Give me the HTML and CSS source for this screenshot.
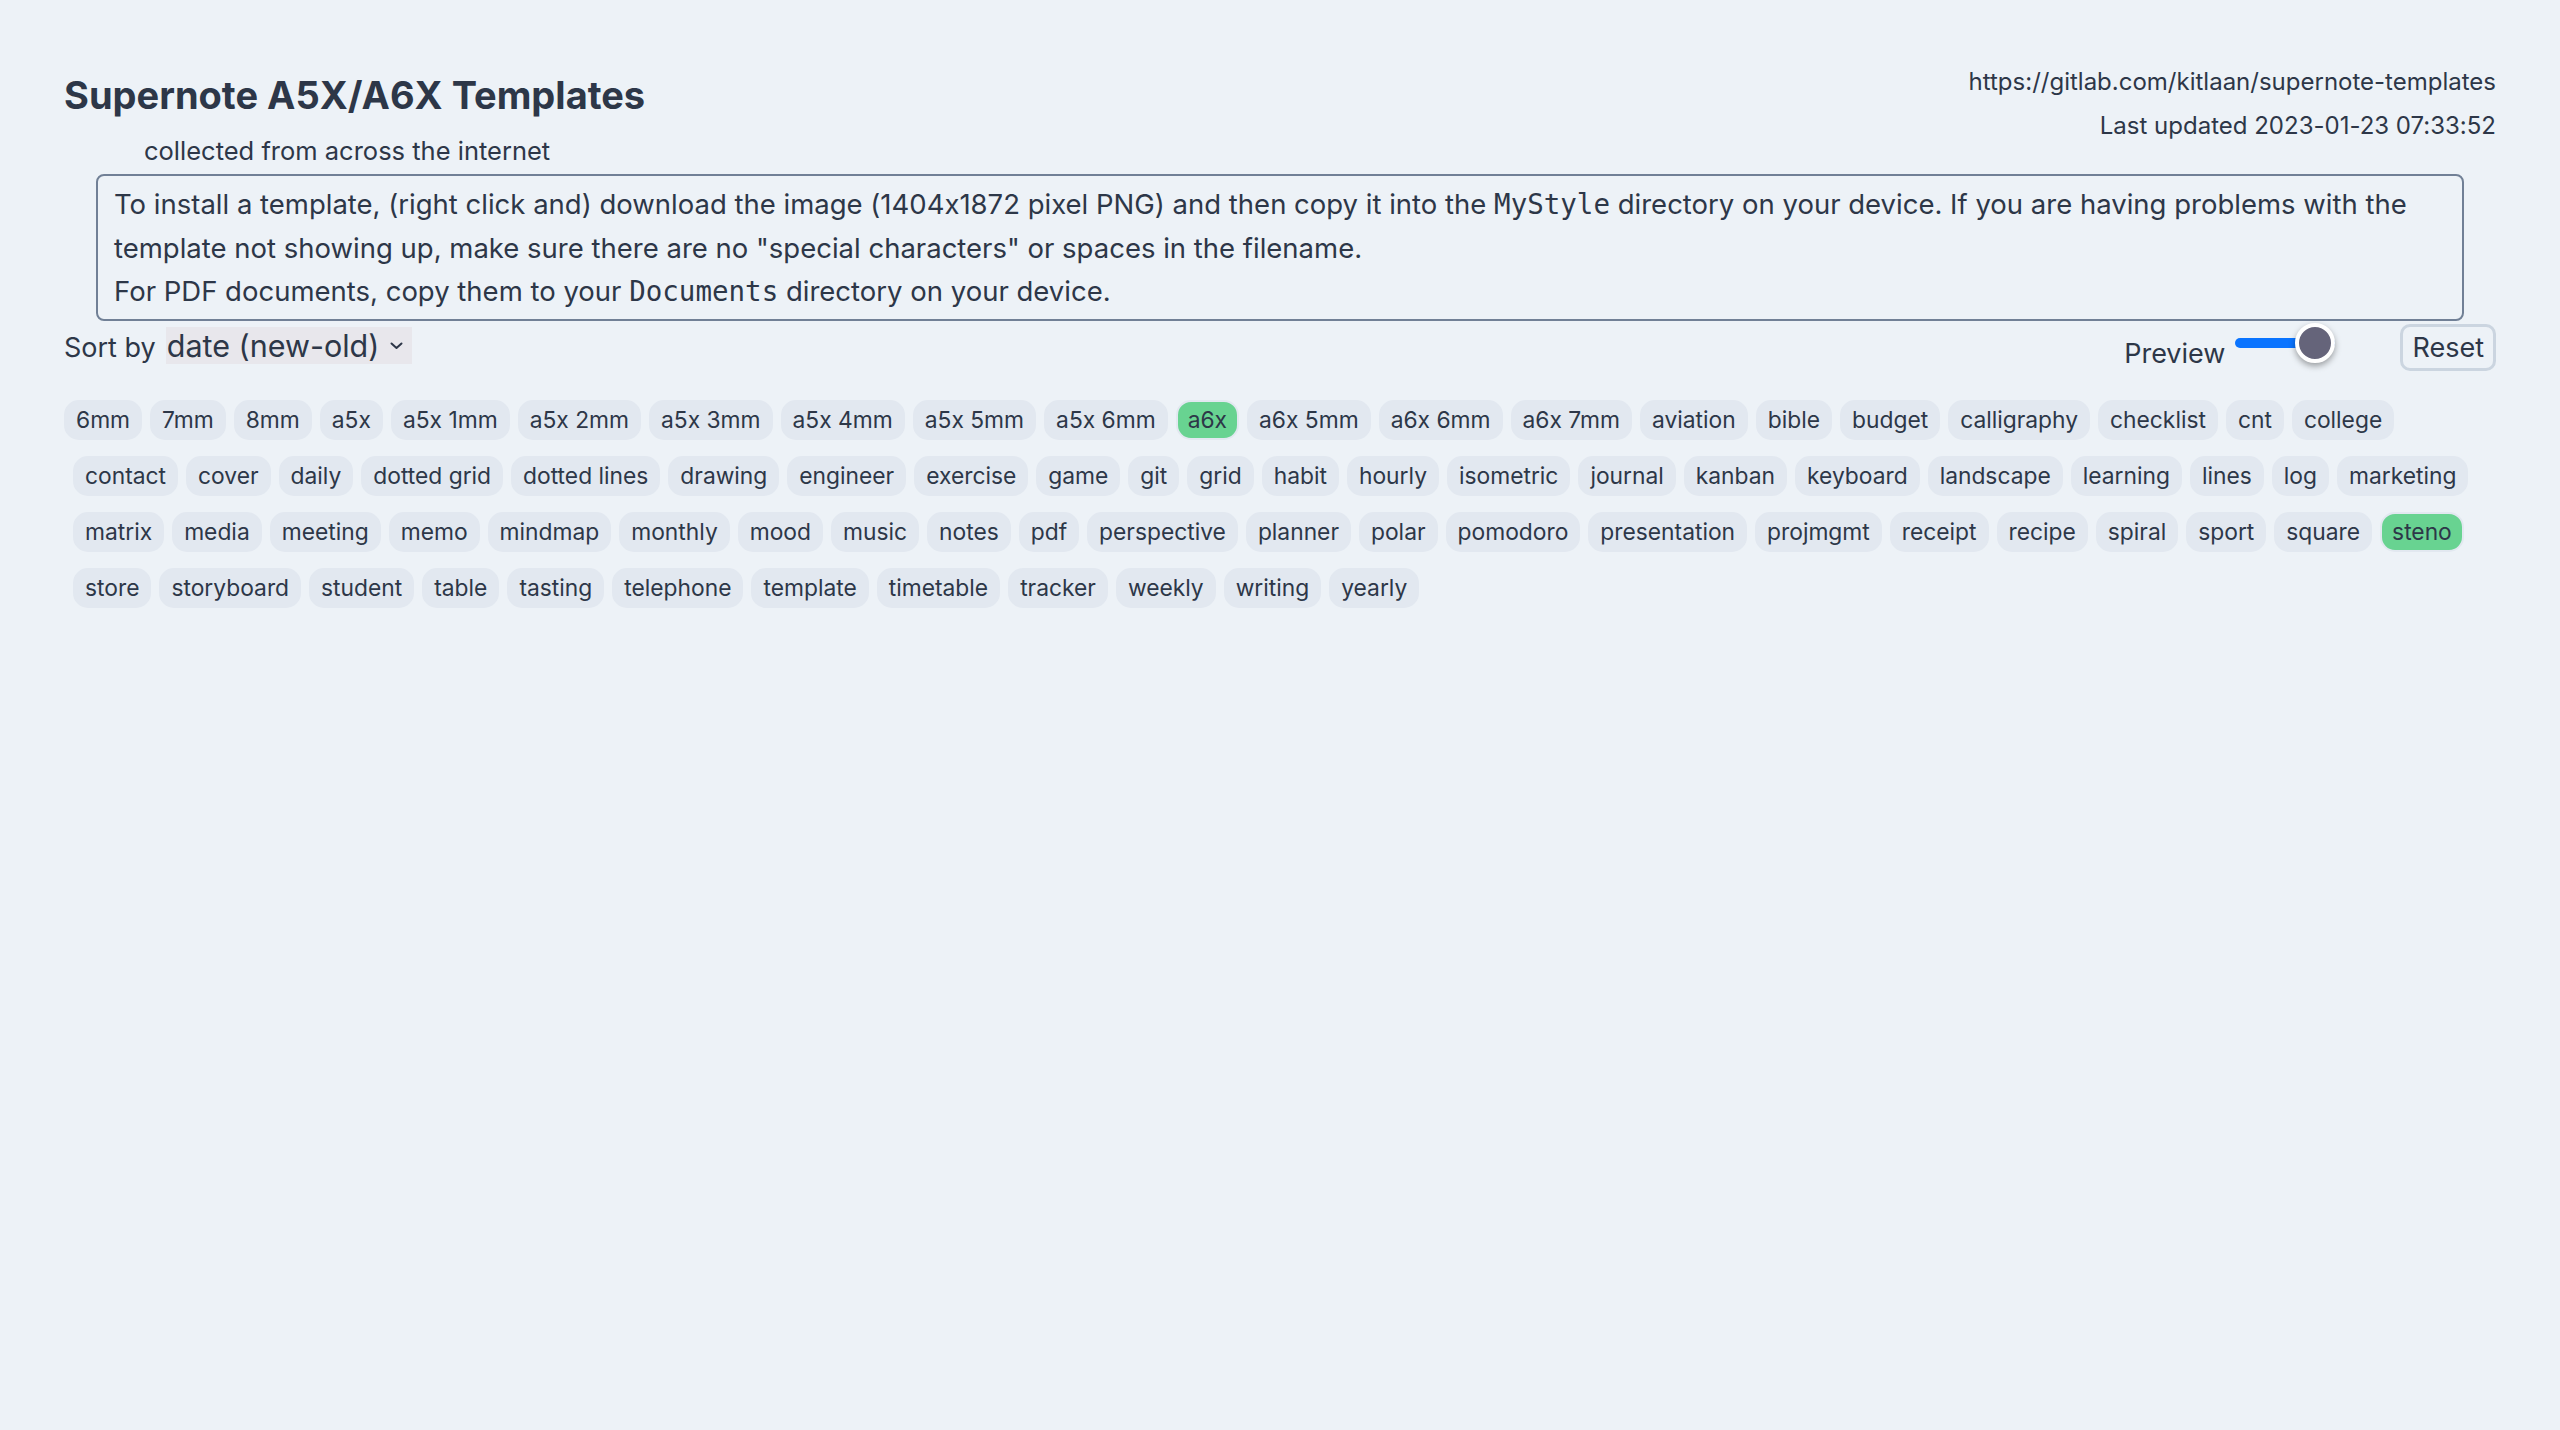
FILE: index.html
```html
<!DOCTYPE html>
<html lang="en">
<head>
<meta charset="utf-8">
<title>Supernote A5X/A6X Templates</title>
<link rel="stylesheet" href="styles.css">
</head>
<body>
<div class="page">
  <header class="header">
    <div class="header-left">
      <h1 class="title">Supernote A5X/A6X Templates</h1>
      <p class="subtitle">collected from across the internet</p>
    </div>
    <div class="header-right">
      <div class="meta-line">https://gitlab.com/kitlaan/supernote-templates</div>
      <div class="meta-line">Last updated 2023-01-23 07:33:52</div>
    </div>
  </header>

  <div class="info">
    <p>To install a template, (right click and) download the image (1404x1872 pixel PNG) and then copy it into the <code>MyStyle</code> directory on your device. If you are having problems with the template not showing up, make sure there are no "special characters" or spaces in the filename.</p>
    <p>For PDF documents, copy them to your <code>Documents</code> directory on your device.</p>
  </div>

  <div class="controls">
    <div class="sort">
      <span class="sort-label">Sort by</span>
      <span class="select-wrap">
        <select class="sort-select">
          <option>date (new-old)</option>
          <option>date (old-new)</option>
          <option>name</option>
        </select>
        <svg class="chevron" width="13" height="8" viewBox="0 0 13 8"><path d="M1.5 1.5 L6.5 6 L11.5 1.5" fill="none" stroke="#2d3748" stroke-width="2" stroke-linecap="round" stroke-linejoin="round"/></svg>
      </span>
    </div>
    <div class="view">
      <span class="preview-label">Preview</span>
      <input class="preview-range" type="range" min="0" max="10" value="10">
      <button class="reset">Reset</button>
    </div>
  </div>

  <div class="tags">
    <div class="tag-row first">
      <span class="tag">6mm</span><span class="tag">7mm</span><span class="tag">8mm</span><span class="tag">a5x</span><span class="tag">a5x 1mm</span><span class="tag">a5x 2mm</span><span class="tag">a5x 3mm</span><span class="tag">a5x 4mm</span><span class="tag">a5x 5mm</span><span class="tag">a5x 6mm</span><span class="tag on">a6x</span><span class="tag">a6x 5mm</span><span class="tag">a6x 6mm</span><span class="tag">a6x 7mm</span><span class="tag">aviation</span><span class="tag">bible</span><span class="tag">budget</span><span class="tag">calligraphy</span><span class="tag">checklist</span><span class="tag">cnt</span><span class="tag">college</span>
    </div>
    <div class="tag-row">
      <span class="tag">contact</span><span class="tag">cover</span><span class="tag">daily</span><span class="tag">dotted grid</span><span class="tag">dotted lines</span><span class="tag">drawing</span><span class="tag">engineer</span><span class="tag">exercise</span><span class="tag">game</span><span class="tag">git</span><span class="tag">grid</span><span class="tag">habit</span><span class="tag">hourly</span><span class="tag">isometric</span><span class="tag">journal</span><span class="tag">kanban</span><span class="tag">keyboard</span><span class="tag">landscape</span><span class="tag">learning</span><span class="tag">lines</span><span class="tag">log</span><span class="tag">marketing</span>
    </div>
    <div class="tag-row">
      <span class="tag">matrix</span><span class="tag">media</span><span class="tag">meeting</span><span class="tag">memo</span><span class="tag">mindmap</span><span class="tag">monthly</span><span class="tag">mood</span><span class="tag">music</span><span class="tag">notes</span><span class="tag">pdf</span><span class="tag">perspective</span><span class="tag">planner</span><span class="tag">polar</span><span class="tag">pomodoro</span><span class="tag">presentation</span><span class="tag">projmgmt</span><span class="tag">receipt</span><span class="tag">recipe</span><span class="tag">spiral</span><span class="tag">sport</span><span class="tag">square</span><span class="tag on">steno</span>
    </div>
    <div class="tag-row">
      <span class="tag">store</span><span class="tag">storyboard</span><span class="tag">student</span><span class="tag">table</span><span class="tag">tasting</span><span class="tag">telephone</span><span class="tag">template</span><span class="tag">timetable</span><span class="tag">tracker</span><span class="tag">weekly</span><span class="tag">writing</span><span class="tag">yearly</span>
    </div>
  </div>
</div>
</body>
</html>
```
FILE: styles.css
```css
* { box-sizing: border-box; }

html, body {
  margin: 0;
  padding: 0;
  background: #edf2f7;
  color: #2d3748;
  font-family: Inter, "Noto Sans", "Liberation Sans", sans-serif;
  font-feature-settings: "calt" 0;
}

.page {
  padding: 64px 64px 64px 64px;
}

.header {
  display: flex;
  justify-content: space-between;
  align-items: flex-start;
}

.title {
  margin: 8px 0 0 0;
  font-size: 38px;
  line-height: 46px;
  font-weight: 700;
}

.subtitle {
  margin: 14px 0 0 80px;
  font-size: 25.5px;
  line-height: 37px;
}

.header-right {
  margin-top: -4px;
  text-align: right;
  font-size: 24px;
}

.meta-line {
  line-height: 44px;
}

.info {
  margin: 5px 32px 0 32px;
  border: 2px solid #718096;
  border-radius: 8px;
  padding: 7px 16px 5px 16px;
  font-size: 27.5px;
  line-height: 43.5px;
}

.info p {
  margin: 0;
}

.info code {
  font-family: "DejaVu Sans Mono", "Liberation Mono", monospace;
  font-size: 27.5px;
  line-height: 1;
}

.controls {
  display: flex;
  justify-content: space-between;
  align-items: flex-start;
}

.sort {
  margin-top: 6px;
  display: flex;
  align-items: baseline;
  gap: 10px;
}

.sort-label {
  font-size: 27px;
}

.select-wrap {
  position: relative;
  display: inline-flex;
}

.sort-select {
  -webkit-appearance: none;
  appearance: none;
  border: none;
  border-radius: 0;
  background: #e8e7ec;
  color: #2d3748;
  font-family: inherit;
  font-feature-settings: "calt" 0;
  font-size: 30.5px;
  height: 37px;
  line-height: 37px;
  padding: 0 32px 0 1px;
  margin: 0;
}

.chevron {
  position: absolute;
  right: 9px;
  top: 15px;
  pointer-events: none;
}

.view {
  margin-top: 3px;
  display: flex;
  align-items: flex-end;
}

.preview-label {
  font-size: 27px;
  line-height: 35px;
}

.preview-range {
  -webkit-appearance: none;
  appearance: none;
  width: 100px;
  height: 38px;
  margin: 0 65px 9px 10px;
  background: transparent;
}

.preview-range::-webkit-slider-runnable-track {
  height: 10px;
  background: #0a74ff;
  border-radius: 5px;
}

.preview-range::-webkit-slider-thumb {
  -webkit-appearance: none;
  appearance: none;
  box-sizing: border-box;
  width: 40px;
  height: 40px;
  margin-top: -15px;
  border-radius: 50%;
  background: #65647a;
  border: 4px solid #ffffff;
  box-shadow: 0 3px 6px rgba(0, 0, 0, 0.35);
}

.reset {
  font-family: inherit;
  font-size: 27px;
  line-height: 35px;
  color: #2d3748;
  background: #edf2f7;
  border: 3px solid #cbd5e0;
  border-radius: 10px;
  padding: 3px 9px;
  margin: 0;
}

.tags {
  margin-top: 29px;
  display: flex;
  flex-direction: column;
  gap: 16px;
}

.tag-row {
  display: flex;
  gap: 8px;
  padding-left: 9px;
}

.tag-row.first {
  padding-left: 0;
}

.tag {
  display: inline-block;
  height: 40px;
  line-height: 36px;
  padding: 0 10px;
  font-size: 22.8px;
  background: #e2e8f0;
  border: 2px solid #e2e8f0;
  border-radius: 15px;
  white-space: nowrap;
}

.tag.on {
  background: #68d391;
}
```
